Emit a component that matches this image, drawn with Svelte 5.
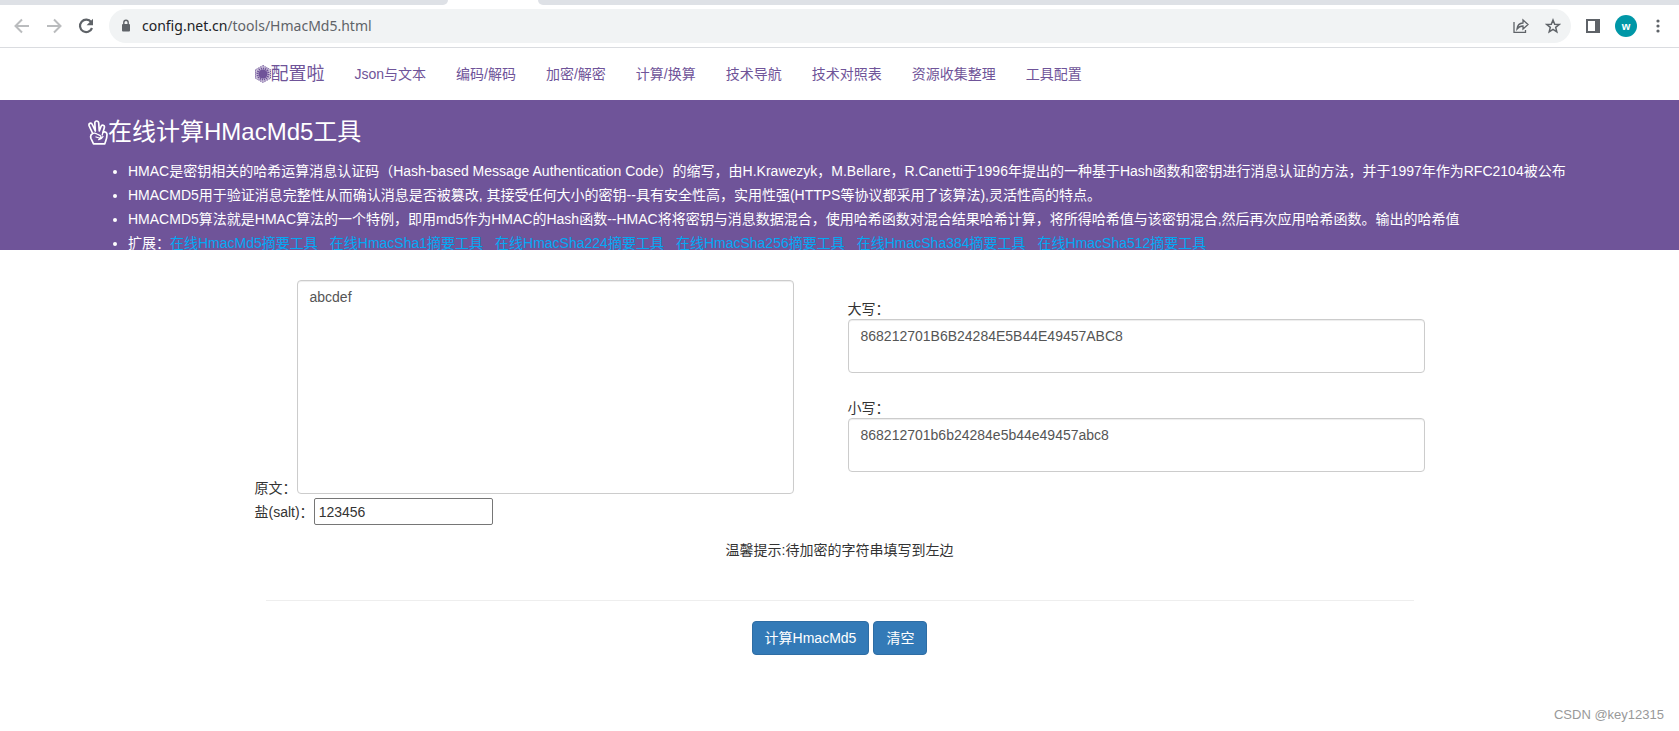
<script lang="ts">
  const menu = ['Json与文本', '编码/解码', '加密/解密', '计算/换算', '技术导航', '技术对照表', '资源收集整理', '工具配置'];
  const related = ['Md5', 'Sha1', 'Sha224', 'Sha256', 'Sha384', 'Sha512'];
  const notes = [
    'HMAC是密钥相关的哈希运算消息认证码（Hash-based Message Authentication Code）的缩写，由H.Krawezyk，M.Bellare，R.Canetti于1996年提出的一种基于Hash函数和密钥进行消息认证的方法，并于1997年作为RFC2104被公布',
    'HMACMD5用于验证消息完整性从而确认消息是否被篡改, 其接受任何大小的密钥--具有安全性高，实用性强(HTTPS等协议都采用了该算法),灵活性高的特点。',
    'HMACMD5算法就是HMAC算法的一个特例，即用md5作为HMAC的Hash函数--HMAC将将密钥与消息数据混合，使用哈希函数对混合结果哈希计算，将所得哈希值与该密钥混合,然后再次应用哈希函数。输出的哈希值',
  ];

  let source = $state('abcdef');
  let salt = $state('123456');
  let upper = $state('868212701B6B24284E5B44E49457ABC8');
  let lower = $state('868212701b6b24284e5b44e49457abc8');

  function clearAll() {
    source = '';
    salt = '';
    upper = '';
    lower = '';
  }
</script>

<div class="page">
  <!-- Browser bar -->
  <div class="tabstrip">
    <span class="tab-left"></span>
    <span class="tab-right"></span>
  </div>
  <div class="toolbar">
    <button class="tool" aria-label="Back">
      <svg width="16" height="16" viewBox="0 0 16 16" fill="none" stroke="#babcbe" stroke-width="2"><path d="M15 8H2M8 1.5L1.5 8L8 14.5" /></svg>
    </button>
    <button class="tool" aria-label="Forward">
      <svg width="16" height="16" viewBox="0 0 16 16" fill="none" stroke="#babcbe" stroke-width="2"><path d="M1 8h13M8 1.5L14.5 8L8 14.5" /></svg>
    </button>
    <button class="tool" aria-label="Reload">
      <svg width="16" height="16" viewBox="0 0 16 16"><path d="M13.2 4.2A6.2 6.2 0 1 0 14 10" fill="none" stroke="#5f6368" stroke-width="2.2" /><path d="M15 .8v6.4H8.6z" fill="#5f6368" /></svg>
    </button>
    <div class="address">
      <svg width="10" height="14" viewBox="0 0 10 14"><rect x="1" y="5" width="8" height="7.5" rx="1" fill="#5f6368" /><path d="M2.8 5.5V3.500a2.2 2.2 0 0 1 4.4 0v2" fill="none" stroke="#5f6368" stroke-width="1.4" /></svg>
      <span class="url">config.net.cn<span class="path">/tools/HmacMd5.html</span></span>
      <button class="tool" aria-label="Share">
        <svg width="16" height="16" viewBox="0 0 16 16" fill="none" stroke="#5f6368" stroke-width="1.3"><path d="M1 4v10.3h11.5V12" /><path d="M4 11c.4-4 2.5-5.8 6-6V2l5 4.500-5 4.500V8c-2.700 0-4.500 1-6 3z" /></svg>
      </button>
      <button class="tool" aria-label="Bookmark">
        <svg width="16" height="16" viewBox="0 0 16 16" fill="none" stroke="#5f6368" stroke-width="1.5"><path d="M8 2l1.7 4.200 4.500.3-3.500 2.900 1.100 4.400L8 11.400l-3.800 2.400 1.100-4.400L1.800 6.500l4.500-.3z" /></svg>
      </button>
    </div>
    <button class="tool" aria-label="Side panel">
      <svg width="14" height="14" viewBox="0 0 14 14"><path d="M0 0h14v14H0zM2 2v10h7V2z" fill="#5f6368" fill-rule="evenodd" /></svg>
    </button>
    <button class="avatar">w</button>
    <button class="tool more" aria-label="Menu">
      <svg width="4" height="14" viewBox="0 0 4 14" fill="#5f6368"><circle cx="2" cy="2" r="1.6" /><circle cx="2" cy="7" r="1.6" /><circle cx="2" cy="12" r="1.6" /></svg>
    </button>
  </div>

  <!-- Site menu -->
  <nav class="container">
    <a class="brand" href="/">
      <svg width="16" height="18" viewBox="-8 -9 16 18" fill="none" stroke="#6f5499">
        <path d="M0-8.500L7.500-4.300v8.600L0 8.500l-7.500-4.200v-8.600z" fill="#6f5499" fill-opacity=".35" stroke-dasharray="1.200 .8" />
        <circle r="4.5" fill="#6f5499" stroke="none" />
        <circle r="5.5" stroke-width="2" stroke-dasharray="1.300 .8" />
      </svg>配置啦
    </a>
    {#each menu as item}
      <a href="/">{item}</a>
    {/each}
  </nav>

  <!-- Tool description -->
  <header class="banner">
    <h1>
      <svg width="20" height="25" viewBox="0 0 20 25" fill="none" stroke="#fff" stroke-width="1.7" stroke-linejoin="round" stroke-linecap="round">
        <path d="M4.700 13.500L1.200 6C.2 3.300 3.200 2.200 4.300 4.500L7.300 11 6.800 3c0-2.700 3.600-2.700 3.900 0l.6 8 1.700-4.500c.9-2.300 4-1.300 3.300 1.200L15 12.300c2.200-1.300 4 .2 4 2.200 0 4-1 5.500-2.200 9.300H5.500L3 18.500c-.8-2.500 0-4.300 1.700-5z" />
        <path d="M4.700 13.500c1.500-1 3-.3 4.300.5l3.300 1.700c1.400 1 .5 2.700-1 2.300L8 17M15 12.300l-.8 2.700M15 16.500c-1 2.300-2.700 2.800-4.300 3.200" stroke-width="1.300" />
      </svg>在线计算HMacMd5工具
    </h1>
    <ul>
      {#each notes as note}
        <li>{note}</li>
      {/each}
      <li>
        扩展：{#each related as name}<a href="/">在线Hmac{name}摘要工具</a>{/each}
      </li>
    </ul>
  </header>

  <main class="container">
    <div class="columns">
      <div class="input-side">
        <div class="field">
          <label for="source">原文：</label>
          <textarea id="source" class="control source" bind:value={source}></textarea>
        </div>
        <div class="field salt-field">
          <label for="salt">盐(salt)：</label>
          <input id="salt" class="salt" type="text" bind:value={salt} />
        </div>
      </div>
      <div class="output-side">
        <label for="upper">大写：</label>
        <textarea id="upper" class="control result" bind:value={upper}></textarea>
        <label for="lower">小写：</label>
        <textarea id="lower" class="control result" bind:value={lower}></textarea>
      </div>
    </div>
    <p class="tip">温馨提示:待加密的字符串填写到左边</p>
    <hr />
    <div class="actions">
      <button class="btn">计算HmacMd5</button>
      <button class="btn" onclick={clearAll}>清空</button>
    </div>
  </main>

  <footer>CSDN @key12315</footer>
</div>

<style>
  :global(body) {
    margin: 0;
    background: #fff;
  }

  .page {
    display: flex;
    flex-direction: column;
    min-height: 100vh;
    font: 14px/20px 'Liberation Sans', 'Noto Sans CJK SC', sans-serif;
    color: #333;
  }

  .page * {
    box-sizing: border-box;
  }

  button,
  input,
  textarea {
    font: inherit;
  }

  .tabstrip {
    display: flex;
    justify-content: space-between;
    gap: 90px;
    height: 5px;
  }

  .tabstrip span {
    background: #dee1e6;
  }

  .tab-left {
    flex: 448;
    border-bottom-right-radius: 6px;
  }

  .tab-right {
    flex: 1141;
    border-bottom-left-radius: 6px;
  }

  .toolbar {
    display: flex;
    align-items: center;
    gap: 14px;
    height: 43px;
    padding: 0 18px 0 13px;
    border-bottom: 1px solid #dadce0;
  }

  .tool {
    display: flex;
    padding: 0;
    margin: 0 1px;
    border: 0;
    background: none;
  }

  .more {
    margin-left: 5px;
  }

  .address {
    flex: 1;
    display: flex;
    align-items: center;
    gap: 14px;
    height: 34px;
    padding: 0 9px 0 12px;
    border-radius: 17px;
    background: #f1f3f4;
  }

  .url {
    flex: 1;
    margin-left: -3px;
    font-family: 'Noto Sans', sans-serif;
    color: #202124;
  }

  .path {
    color: #5f6368;
  }

  .avatar {
    width: 22px;
    height: 22px;
    padding: 0;
    border: 0;
    border-radius: 50%;
    background: #0097a7;
    color: #fff;
    font-size: 11px;
    font-weight: 700;
    line-height: 20px;
  }

  .container {
    width: 1170px;
    max-width: 100%;
    margin: 0 auto;
  }

  nav {
    display: flex;
    align-items: center;
    height: 52px;
  }

  nav a {
    padding: 0 15px;
    color: #6f5499;
    text-decoration: none;
    white-space: nowrap;
  }

  nav .brand {
    display: flex;
    align-items: center;
    padding-left: 0;
    font-size: 18px;
  }

  .banner {
    height: 150px;
    padding: 19px 88px 0;
    overflow: hidden;
    background: #6f5499;
    color: #fff;
  }

  h1 {
    display: flex;
    align-items: center;
    margin: 0 0 14px;
    font-size: 24px;
    font-weight: 400;
    line-height: 26px;
  }

  ul {
    margin: 0;
    padding-left: 40px;
    line-height: 24px;
  }

  li a {
    margin-right: 12px;
    color: #03a9f4;
    text-decoration: none;
  }

  .columns {
    display: flex;
    gap: 54px;
    padding-top: 30px;
  }

  .input-side {
    flex: 539;
  }

  .field {
    display: flex;
    align-items: flex-end;
  }

  .field label {
    line-height: 12px;
  }

  .salt-field {
    align-items: center;
    margin-top: 4px;
  }

  .control {
    display: block;
    padding: 6px 12px;
    border: 1px solid #ccc;
    border-radius: 4px;
    box-shadow: inset 0 1px 1px rgba(0, 0, 0, 0.075);
    color: #555;
    resize: none;
  }

  .source {
    flex: 1;
    height: 214px;
  }

  .salt {
    width: 179px;
    height: 27px;
    padding: 1px 4px;
    border: 1px solid #767676;
    border-radius: 2px;
    color: #333;
  }

  .output-side {
    flex: 577;
    padding-top: 19px;
  }

  .output-side label {
    display: block;
  }

  .result {
    width: 100%;
    height: 54px;
    margin-bottom: 25px;
  }

  .tip {
    margin: 15px 0 40px;
    text-align: center;
  }

  hr {
    margin: 0 11px 20px;
    border: 0;
    border-top: 1px solid #eee;
  }

  .actions {
    display: flex;
    justify-content: center;
    gap: 4px;
  }

  .btn {
    padding: 6px 12px;
    border: 1px solid #2e6da4;
    border-radius: 4px;
    background: #337ab7;
    color: #fff;
    cursor: pointer;
  }

  footer {
    margin-top: auto;
    padding: 0 15px 6px;
    text-align: right;
    font-size: 13px;
    color: #999;
  }
</style>
